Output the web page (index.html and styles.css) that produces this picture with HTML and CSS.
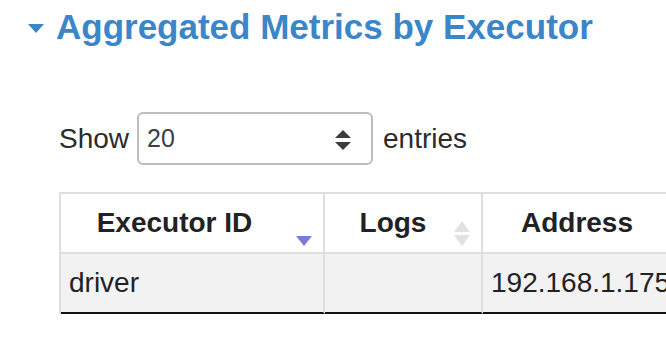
FILE: index.html
```html
<!doctype html>
<html lang="en">
    <head>
        <meta charset="utf-8">
        <title>Stage Details</title>
        <link rel="stylesheet" href="styles.css">
    </head>

    <body>
        <h4 class="collapse-title">
            <span class="caret"></span>
            <a>Aggregated Metrics by Executor</a>
        </h4>

        <div class="aggregated">
            <div class="length">
                <span>Show</span>
                <div class="select">
                    <span class="value">20</span>
                    <svg class="updown" width="16" height="22" viewBox="0 0 16 22">
                        <polygon points="0,9 8,1 16,9" fill="#3c3c3c"/>
                        <polygon points="0,13 16,13 8,21" fill="#3c3c3c"/>
                    </svg>
                </div>
                <span>entries</span>
            </div>

            <table class="executors">
                <thead>
                    <tr>
                        <th class="c1">Executor ID
                            <svg class="sort" width="18" height="28" viewBox="0 0 18 28">
                                <polygon points="1,16 17,16 9,26" fill="#7a7adb"/>
                            </svg>
                        </th>
                        <th class="c2">Logs
                            <svg class="sort" width="18" height="28" viewBox="0 0 18 28">
                                <polygon points="1,12 9,1 17,12" fill="#e2e2e2"/>
                                <polygon points="1,15 17,15 9,26" fill="#e2e2e2"/>
                            </svg>
                        </th>
                        <th class="c3">Address</th>
                    </tr>
                </thead>
                <tbody>
                    <tr>
                        <td>driver</td>
                        <td></td>
                        <td>192.168.1.175:52431</td>
                    </tr>
                </tbody>
            </table>
        </div>
    </body>
</html>
```

FILE: styles.css
```css
html{
    overflow: hidden;
}
body{
    margin: 0;
    overflow: hidden;
    font-family: "Liberation Sans", Arial, sans-serif;
    color: #222;
    background: #fff;
}
.collapse-title{
    display: flex;
    align-items: center;
    margin: 6px 0 0 28px;
    font-size: 35px;
    font-weight: bold;
    line-height: 42px;
    color: #3a86c8;
}
.caret{
    width: 0;
    height: 0;
    margin-right: 12px;
    margin-top: 2px;
    border-left: 8.5px solid transparent;
    border-right: 8.5px solid transparent;
    border-top: 9px solid #3a86c8;
}
.aggregated{
    margin-left: 59px;
}
.length{
    display: flex;
    align-items: center;
    margin-top: 64px;
    font-size: 28px;
    color: #2b2b2b;
}
.select{
    display: flex;
    align-items: center;
    justify-content: space-between;
    box-sizing: border-box;
    width: 236px;
    height: 53px;
    margin: 0 10px 0 8px;
    padding: 0 20px 0 8px;
    border: 2px solid #bdbdbd;
    border-radius: 6px;
    font-size: 25px;
    color: #3a3f45;
}
.updown{
    margin-top: 2px;
}
.executors{
    width: 634px;
    margin-top: 27px;
    table-layout: fixed;
    border-collapse: separate;
    border-spacing: 0;
    border-left: 2px solid #dedede;
    font-size: 28px;
    line-height: 32px;
    white-space: nowrap;
}
.executors th{
    position: relative;
    box-sizing: border-box;
    padding: 13px 30px 13px 10px;
    border-top: 2px solid #dedede;
    border-right: 2px solid #dedede;
    border-bottom: 2px solid #dedede;
    text-align: center;
    font-weight: bold;
    color: #222;
}
.executors .c1{
    width: 264px;
    padding-right: 45px;
}
.executors .c2{
    width: 158px;
}
.executors .c3{
    width: 210px;
}
.sort{
    position: absolute;
    right: 10px;
    bottom: 4px;
}
.executors td{
    padding: 13px 8px;
    border-right: 2px solid #dedede;
    border-bottom: 2px solid #111;
    background: #f2f2f2;
    overflow: hidden;
}
```
